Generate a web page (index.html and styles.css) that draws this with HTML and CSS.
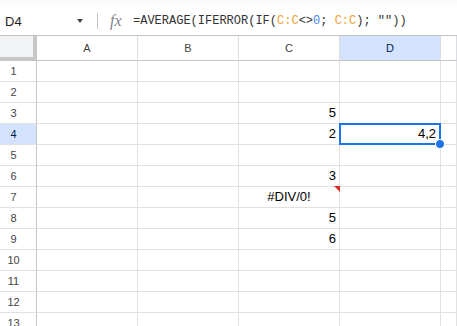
FILE: index.html
```html
<!DOCTYPE html>
<html lang="fr">
<head>
    <meta charset="UTF-8">
    <meta name="viewport" content="width=device-width, initial-scale=1.0">
    <title>Feuille de calcul</title>
    <link rel="stylesheet" href="styles.css">
</head>
<body>
    <div class="top-strip"></div>

    <!-- Barre de formule -->
    <div class="formula-bar">
        <div class="name-box">
            <span>D4</span>
            <span class="arrow"></span>
        </div>
        <div class="sep"></div>
        <div class="fx">fx</div>
        <div class="formula">=AVERAGE(IFERROR(IF(<span class="ref">C:C</span>&lt;&gt;<span class="num">0</span>; <span class="ref">C:C</span>); ""))</div>
    </div>

    <!-- Grille -->
    <div class="sheet">
        <div class="corner"></div>
        <div class="col-head">A</div>
        <div class="col-head">B</div>
        <div class="col-head">C</div>
        <div class="col-head active">D</div>
        <div class="col-head"></div>

        <div class="row-head">1</div><div class="cell"></div><div class="cell"></div><div class="cell"></div><div class="cell"></div><div class="cell"></div>
        <div class="row-head">2</div><div class="cell"></div><div class="cell"></div><div class="cell"></div><div class="cell"></div><div class="cell"></div>
        <div class="row-head">3</div><div class="cell"></div><div class="cell"></div><div class="cell">5</div><div class="cell"></div><div class="cell"></div>
        <div class="row-head active">4</div><div class="cell"></div><div class="cell"></div><div class="cell">2</div>
        <div class="cell selected">4,2<span class="handle"></span></div><div class="cell"></div>
        <div class="row-head">5</div><div class="cell"></div><div class="cell"></div><div class="cell"></div><div class="cell"></div><div class="cell"></div>
        <div class="row-head">6</div><div class="cell"></div><div class="cell"></div><div class="cell">3</div><div class="cell"></div><div class="cell"></div>
        <div class="row-head">7</div><div class="cell"></div><div class="cell"></div>
        <div class="cell error">#DIV/0!<span class="flag"></span></div><div class="cell"></div><div class="cell"></div>
        <div class="row-head">8</div><div class="cell"></div><div class="cell"></div><div class="cell">5</div><div class="cell"></div><div class="cell"></div>
        <div class="row-head">9</div><div class="cell"></div><div class="cell"></div><div class="cell">6</div><div class="cell"></div><div class="cell"></div>
        <div class="row-head">10</div><div class="cell"></div><div class="cell"></div><div class="cell"></div><div class="cell"></div><div class="cell"></div>
        <div class="row-head">11</div><div class="cell"></div><div class="cell"></div><div class="cell"></div><div class="cell"></div><div class="cell"></div>
        <div class="row-head">12</div><div class="cell"></div><div class="cell"></div><div class="cell"></div><div class="cell"></div><div class="cell"></div>
        <div class="row-head">13</div><div class="cell"></div><div class="cell"></div><div class="cell"></div><div class="cell"></div><div class="cell"></div>
    </div>
</body>
</html>
```

FILE: styles.css
```css
body {
    font-family: 'Liberation Sans', Arial, sans-serif;
    margin: 0;
    padding: 0;
    background-color: #fff;
    overflow: hidden;
}
* {
    box-sizing: border-box;
}
.top-strip {
    height: 7px;
    background-color: #f9fbfd;
}
.formula-bar {
    display: flex;
    align-items: center;
    height: 29px;
    border-bottom: 1px solid #c4c7c5;
    color: #1f1f1f;
}
.name-box {
    width: 84px;
    display: flex;
    align-items: center;
    justify-content: space-between;
    padding-left: 5px;
    padding-right: 1px;
    font-size: 13px;
}
.arrow {
    width: 0;
    height: 0;
    border-left: 3px solid transparent;
    border-right: 3px solid transparent;
    border-top: 4px solid #444;
}
.sep {
    width: 1px;
    height: 16px;
    margin-left: 13px;
    background-color: #c4c7c5;
}
.fx {
    width: 23px;
    margin-left: 12px;
    font-family: 'Liberation Serif', serif;
    font-style: italic;
    font-size: 16px;
    color: #80868b;
}
.formula {
    font-family: 'Liberation Mono', 'DejaVu Sans Mono', monospace;
    font-size: 12px;
    color: #333;
    white-space: pre;
}
.ref {
    color: #f0a13a;
}
.num {
    color: #4a86e8;
}
.sheet {
    display: grid;
    grid-template-columns: 37px repeat(4, 101px) 1fr;
    grid-template-rows: 25px;
    grid-auto-rows: 21px;
}
.corner {
    background-color: #f1f3f4;
    border-right: 4px solid #c4c7c5;
    border-bottom: 4px solid #c4c7c5;
}
.col-head {
    display: flex;
    align-items: center;
    justify-content: center;
    font-size: 11px;
    color: #444;
    border-right: 1px solid #dadce0;
    border-bottom: 1px solid #c4c7c5;
}
.row-head {
    font-size: 11px;
    color: #444;
    text-align: center;
    line-height: 20px;
    padding-right: 9px;
    border-right: 1px solid #c4c7c5;
    border-bottom: 1px solid #e1e1e1;
}
.active {
    background-color: #d3e3fd;
    color: #041e49;
}
.cell {
    position: relative;
    font-size: 13px;
    color: #000;
    text-align: right;
    line-height: 20px;
    padding: 0 3px;
    border-right: 1px solid #e1e1e1;
    border-bottom: 1px solid #e1e1e1;
}
.selected {
    padding-right: 4px;
}
.selected::after {
    content: "";
    position: absolute;
    top: -1px;
    left: -1px;
    right: -1px;
    bottom: -1px;
    border: 2px solid #1a73e8;
    z-index: 2;
}
.handle {
    position: absolute;
    right: -5px;
    bottom: -5px;
    width: 10px;
    height: 10px;
    border-radius: 50%;
    background-color: #1a73e8;
    border: 1px solid #fff;
    z-index: 3;
}
.error {
    text-align: center;
}
.flag {
    position: absolute;
    top: -1px;
    right: -1px;
    width: 0;
    height: 0;
    border-top: 6px solid #d93025;
    border-left: 6px solid transparent;
}
```
